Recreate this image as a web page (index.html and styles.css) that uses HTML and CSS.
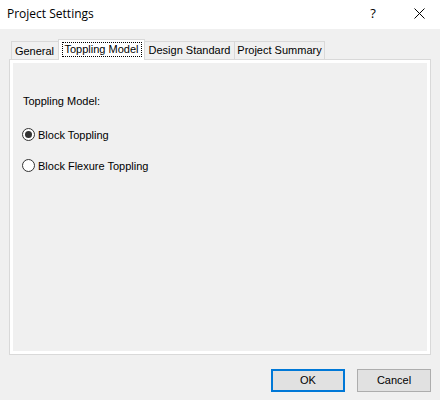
FILE: index.html
```html
<!DOCTYPE html>
<html lang="en">

<head>
    <meta charset="UTF-8">
    <title>Project Settings</title>
    <link rel="stylesheet" href="styles.css">
</head>

<body>
    <div class="dialog">
        <div class="dialog-titlebar">
            <span class="dialog-title">Project Settings</span>
            <span class="dialog-help">?</span>
            <span class="dialog-close">
                <svg width="11" height="11" viewBox="0 0 11 11">
                    <path d="M0.5 0.5 L10.5 10.5 M10.5 0.5 L0.5 10.5" stroke="#000" stroke-width="1" fill="none" />
                </svg>
            </span>
        </div>

        <div class="dialog-body">
            <div class="tab-strip">
                <div class="tab tab-first">General</div>
                <div class="tab tab-selected"><span class="tab-focus">Toppling Model</span></div>
                <div class="tab">Design Standard</div>
                <div class="tab">Project Summary</div>
            </div>
            <div class="tab-panel">
                <div class="tab-page">
                    <div class="group-label">Toppling Model:</div>
                    <label class="radio-row">
                        <span class="radio radio-checked"></span>
                        <span class="radio-text">Block Toppling</span>
                    </label>
                    <label class="radio-row">
                        <span class="radio"></span>
                        <span class="radio-text">Block Flexure Toppling</span>
                    </label>
                </div>
            </div>

            <div class="dialog-buttons">
                <span class="button button-default">OK</span>
                <span class="button">Cancel</span>
            </div>
        </div>
    </div>
</body>

</html>
```

FILE: styles.css
```css
html, body {
    margin: 0;
    padding: 0;
}

body {
    width: 440px;
    height: 400px;
    background-color: #f0f0f0;
    font-family: "Liberation Sans", Arial, sans-serif;
    font-size: 11px;
    color: #000;
}

.dialog {
    width: 440px;
    height: 400px;
    box-sizing: border-box;
}

.dialog-titlebar {
    display: flex;
    align-items: center;
    height: 29px;
    background-color: #fff;
    box-sizing: border-box;
}

.dialog-title {
    flex: 1;
    padding-left: 7px;
    padding-bottom: 3px;
    font-family: "Open Sans", "Noto Sans", sans-serif;
    font-size: 12px;
}

.dialog-help {
    width: 12px;
    margin-right: 35px;
    padding-bottom: 3px;
    font-family: "Open Sans", "Noto Sans", sans-serif;
    font-size: 13px;
    text-align: center;
}

.dialog-close {
    display: flex;
    width: 11px;
    height: 11px;
    margin-right: 15px;
    margin-bottom: 3px;
}

.dialog-body {
    padding: 10px 9px 0 9px;
}

/* tab header row */
.tab-strip {
    display: flex;
    align-items: flex-end;
    height: 20px;
}

.tab {
    position: relative;
    box-sizing: border-box;
    height: 18px;
    width: 90px;
    padding-top: 2px;
    text-align: center;
    background-color: #f0f0f0;
    border: 1px solid #d9d9d9;
    border-bottom: 0;
    border-left: 0;
    white-space: nowrap;
}

/* the selected tab overlaps its neighbour by two pixels */
.tab-first {
    width: 49px;
    margin-left: 2px;
    margin-right: -2px;
    padding-top: 3px;
    padding-right: 2px;
    border-left: 1px solid #d9d9d9;
}

.tab-selected {
    z-index: 1;
    width: 87px;
    height: 21px;
    margin-bottom: -1px;
    padding-top: 2px;
    background-color: #fff;
    border-left: 1px solid #d9d9d9;
}

.tab-focus {
    display: inline-block;
    padding: 0 2px 1px 2px;
    border: 1px dotted #000;
}

/* tab page area */
.tab-panel {
    box-sizing: border-box;
    width: 422px;
    height: 296px;
    padding: 3px;
    background-color: #fff;
    border: 1px solid #d9d9d9;
}

.tab-page {
    height: 100%;
    box-sizing: border-box;
    padding: 32px 0 0 9px;
    background-color: #f0f0f0;
}

.group-label {
    line-height: 13px;
    margin-bottom: 20px;
    padding-left: 1px;
}

.radio-row {
    display: flex;
    align-items: center;
    height: 13px;
    margin-bottom: 18px;
}

.radio {
    box-sizing: border-box;
    width: 13px;
    height: 13px;
    margin-right: 3px;
    border: 1px solid #333;
    border-radius: 50%;
    background-color: #fff;
    display: flex;
    align-items: center;
    justify-content: center;
}

.radio-checked::after {
    content: "";
    width: 7px;
    height: 7px;
    border-radius: 50%;
    background-color: #333;
}

/* OK / Cancel */
.dialog-buttons {
    display: flex;
    justify-content: flex-end;
    gap: 12px;
    padding-top: 14px;
}

.button {
    box-sizing: border-box;
    width: 74px;
    height: 23px;
    line-height: 21px;
    text-align: center;
    background-color: #e1e1e1;
    border: 1px solid #adadad;
}

.button-default {
    border: 2px solid #0078d7;
    line-height: 19px;
}
```
